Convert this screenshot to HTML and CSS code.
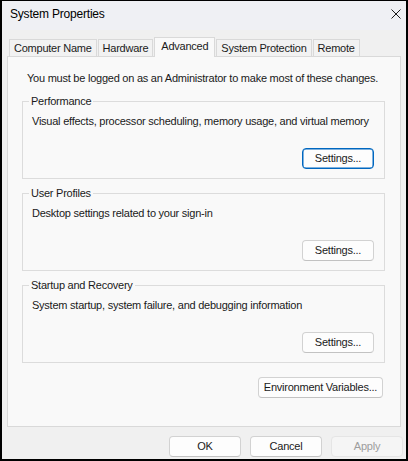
FILE: index.html
```html
<!DOCTYPE html>
<html lang="en">
<head>
<meta charset="utf-8">
<title>System Properties</title>
<link rel="stylesheet" href="styles.css">
</head>
<body>
<div class="window">
  <div class="titlebar">
    <span class="title">System Properties</span>
    <svg class="close" width="10" height="10" viewBox="0 0 10 10" aria-hidden="true">
      <path d="M0.5 0.5 L9.5 9.5 M9.5 0.5 L0.5 9.5" stroke="#1a1a1a" stroke-width="1" fill="none"/>
    </svg>
  </div>
  <div class="body">
    <div class="tabs">
      <div class="tab">Computer Name</div>
      <div class="tab">Hardware</div>
      <div class="tab tab-active">Advanced</div>
      <div class="tab">System Protection</div>
      <div class="tab">Remote</div>
    </div>
    <div class="panel">
      <p class="info">You must be logged on as an Administrator to make most of these changes.</p>
      <fieldset class="group">
        <legend>Performance</legend>
        <p class="desc">Visual effects, processor scheduling, memory usage, and virtual memory</p>
        <div class="group-actions"><button class="btn btn-focus">Settings...</button></div>
      </fieldset>
      <fieldset class="group">
        <legend>User Profiles</legend>
        <p class="desc">Desktop settings related to your sign-in</p>
        <div class="group-actions"><button class="btn">Settings...</button></div>
      </fieldset>
      <fieldset class="group">
        <legend>Startup and Recovery</legend>
        <p class="desc">System startup, system failure, and debugging information</p>
        <div class="group-actions"><button class="btn">Settings...</button></div>
      </fieldset>
      <div class="env-row"><button class="btn btn-env">Environment Variables...</button></div>
    </div>
    <div class="footer">
      <button class="btn">OK</button>
      <button class="btn">Cancel</button>
      <button class="btn btn-disabled">Apply</button>
    </div>
  </div>
</div>
</body>
</html>
```

FILE: styles.css
```css
* { box-sizing: border-box; }
html, body {
  margin: 0;
  padding: 0;
  background: #000;
  width: 408px;
  height: 461px;
  overflow: hidden;
}
body {
  font-family: "Liberation Sans", Arial, sans-serif;
  font-size: 11px;
  line-height: 15px;
  letter-spacing: -0.24px;
  color: #1a1a1a;
}
.window {
  margin: 1px 2px 0 2px;
  width: 404px;
  height: 458px;
  background: #f0f0f0;
  display: flex;
  flex-direction: column;
}
.titlebar {
  height: 29px;
  flex: none;
  display: flex;
  align-items: center;
  justify-content: space-between;
  padding: 0 5px 3px 8px;
  background: #eff0f4;
}
.title {
  font-size: 12px;
  letter-spacing: -0.2px;
  color: #000;
}
.close { display: block; }
.body {
  flex: 1;
  display: flex;
  flex-direction: column;
  padding: 0 5px;
}
.tabs {
  display: flex;
  align-items: flex-end;
  padding: 6px 0 0 2px;
  height: 26px;
  flex: none;
}
.tab {
  height: 17px;
  line-height: 16px;
  padding: 0 4px;
  border: 1px solid #d9d9d9;
  border-bottom: none;
  background: #f2f2f2;
  margin-right: 1px;
  color: #1a1a1a;
  white-space: nowrap;
}
.tab-active {
  height: 20px;
  line-height: 17px;
  margin-bottom: -1px;
  background: #f9f9f9;
  position: relative;
  z-index: 1;
  padding: 0 6px;
}
.panel {
  flex: 1;
  background: #f9f9f9;
  border: 1px solid #d9d9d9;
  padding: 14px 15px 0 14px;
}
.info {
  margin: 0 0 0 5px;
  white-space: nowrap;
}
.group {
  margin: 7px 0 0 0;
  padding: 5px 10px 9px 9px;
  border: 1px solid #dcdcdc;
  min-width: 0;
}
.panel .info + .group { margin-top: 8px; }
.group legend {
  padding: 0 2px;
  margin-left: -3px;
}
.desc {
  margin: 0;
  white-space: nowrap;
}
.group-actions {
  display: flex;
  justify-content: flex-end;
  margin-top: 19px;
}
.btn {
  font-family: inherit;
  font-size: 11px;
  letter-spacing: -0.24px;
  color: #1a1a1a;
  width: 72px;
  height: 21px;
  padding: 0;
  line-height: 19px;
  background: #fdfdfd;
  border: 1px solid #d2d2d2;
  border-bottom-color: #c2c2c2;
  border-radius: 4px;
  text-align: center;
}
.btn-focus {
  border: 1px solid #0067c0;
  box-shadow: inset 0 0 0 0.5px #0067c0;
}
.env-row {
  display: flex;
  justify-content: flex-end;
  margin: 14px 2px 0 0;
}
.btn-env {
  width: 125px;
}
.footer {
  flex: none;
  height: 32px;
  display: flex;
  justify-content: flex-end;
  gap: 9px;
  padding: 9px 0 0 0;
  margin-right: -2px;
}
.btn-disabled {
  color: #9d9d9d;
  background: #f5f5f5;
  border-color: #e5e5e5;
}
```
